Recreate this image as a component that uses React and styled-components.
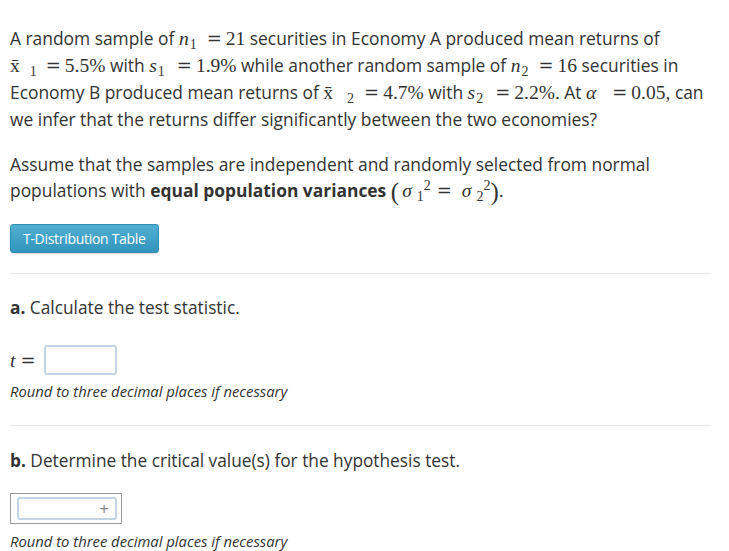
import React from "react";
import styled, { createGlobalStyle } from "styled-components";

const GlobalStyle = createGlobalStyle`
  body {
    margin: 0;
    background: #fff;
    font-family: "Open Sans", "Noto Sans", sans-serif;
    color: #333;
  }
`;

const Page = styled.div`
  width: 701px;
  padding: 25px 0 0 10px;
`;

const Para = styled.p`
  margin: 0 0 ${(p) => p.$gap || 0}px;
  font-size: 17.4px;
  line-height: 26.7px;
`;

const M = styled.span`
  font-family: "Liberation Serif", "DejaVu Serif", serif;
  font-size: 19.5px;
  line-height: 1;
  font-style: ${(p) => (p.$i ? "italic" : "normal")};
  white-space: nowrap;
`;

const Sub = styled.span`
  display: inline-block;
  font-size: 14px;
  font-style: normal;
  line-height: 1;
  vertical-align: -4px;
  margin-left: ${(p) => p.$gap || 1}px;
`;

const Sup = styled.span`
  display: inline-block;
  font-size: 14px;
  font-style: normal;
  line-height: 1;
  vertical-align: 7px;
`;

const Eq = styled.span`
  font-family: "DejaVu Serif", serif;
  font-size: 18px;
  font-style: normal;
  font-weight: normal;
  margin: 0 ${(p) => p.$r ?? 4}px 0 ${(p) => p.$l ?? 10}px;
`;

const Paren = styled.span`
  display: inline-block;
  font-size: 25px;
  line-height: 1;
  vertical-align: -3px;
  margin: 0 ${(p) => p.$r || 0}px 0 ${(p) => p.$l || 0}px;
`;

const TableButton = styled.button`
  display: block;
  height: 29px;
  padding: 0 12px;
  border: 1px solid #2f8db3;
  border-radius: 3px;
  background: linear-gradient(#50b0d3, #3394bd);
  color: #fff;
  font-family: "Open Sans", sans-serif;
  font-size: 14px;
  letter-spacing: -0.3px;
  box-shadow: 0 1px 1px rgba(0, 0, 0, 0.15);
  margin: 20px 0 0;
`;

const Divider = styled.hr`
  border: 0;
  border-top: 1px solid #e8e8e8;
  margin: ${(p) => p.$top}px 0 0;
  width: 701px;
`;

const Heading = styled.h3`
  margin: ${(p) => p.$top || 21}px 0 0;
  font-size: 17.3px;
  font-weight: normal;
  line-height: 26px;
  b {
    font-weight: 700;
  }
`;

const AnswerRow = styled.div`
  display: flex;
  align-items: center;
  height: 30px;
  margin-top: 24px;
`;

const TextBox = styled.input`
  box-sizing: border-box;
  flex: 0 0 auto;
  width: 73px;
  height: 30px;
  margin: 0 0 0 8px;
  padding: 0;
  border: 2px solid #c3d4e6;
  border-radius: 3px;
  background: #fff;
  outline: none;
`;

const Hint = styled.div`
  margin-top: ${(p) => p.$top}px;
  font-size: 14.8px;
  font-style: italic;
  line-height: 20px;
  color: #333;
`;

const ListBox = styled.div`
  box-sizing: border-box;
  width: 112px;
  height: 31px;
  margin-top: 19px;
  border: 1px solid #999;
  padding: 3px 4px 3px 6px;
`;

const ListInner = styled.div`
  box-sizing: border-box;
  height: 23px;
  border: 2px solid #c3d4e6;
  border-radius: 3px;
  display: flex;
  align-items: center;
  justify-content: flex-end;
  padding-right: 6px;
  color: #888;
  font-size: 17px;
`;

export default function App() {
  return (
    <>
      <GlobalStyle />
      <Page>
        <Para $gap={18}>
          A random sample of{" "}
          <M $i>
            n<Sub>1</Sub>
            <Eq>=</Eq>
          </M>
          <M>21</M> securities in Economy A produced mean returns of{" "}
          <M>
            x̄<Sub $gap={10}>1</Sub>
            <Eq $l={9}>=</Eq>5.5%
          </M>{" "}
          with{" "}
          <M $i>
            s<Sub>1</Sub>
            <Eq $l={12}>=</Eq>
          </M>
          <M>1.9%</M> while another random sample of{" "}
          <M $i>
            n<Sub>2</Sub>
            <Eq>=</Eq>
          </M>
          <M>16</M> securities in Economy B produced mean returns of{" "}
          <M>
            x̄<Sub $gap={14}>2</Sub>
            <Eq>=</Eq>4.7%
          </M>{" "}
          with{" "}
          <M $i>
            s<Sub>2</Sub>
            <Eq $l={12}>=</Eq>
          </M>
          <M>2.2%.</M> At{" "}
          <M $i>
            α<Eq $l={16}>=</Eq>
          </M>
          <M>0.05,</M> can we infer that the returns differ significantly
          between the two economies?
        </Para>
        <Para>
          Assume that the samples are independent and randomly selected from
          normal populations with <b>equal population variances</b>{" "}
          <M>
            <Paren $r={3}>(</Paren>
            <i>σ</i>
            <Sub $gap={5}>1</Sub>
            <Sup>2</Sup>
            <Eq $l={6} $r={10}>=</Eq>
            <i>σ</i>
            <Sub $gap={5}>2</Sub>
            <Sup>2</Sup>
            <Paren>)</Paren>.
          </M>
        </Para>
        <TableButton>T-Distribution Table</TableButton>
        <Divider $top={20} />
        <Heading>
          <b>a.</b> Calculate the test statistic.
        </Heading>
        <AnswerRow>
          <M $i>
            t<Eq $l={5} $r={0}>=</Eq>
          </M>
          <TextBox />
        </AnswerRow>
        <Hint $top={6}>Round to three decimal places if necessary</Hint>
        <Divider $top={24} />
        <Heading $top={22}>
          <b>b.</b> Determine the critical value(s) for the hypothesis test.
        </Heading>
        <ListBox>
          <ListInner>+</ListInner>
        </ListBox>
        <Hint $top={7}>Round to three decimal places if necessary</Hint>
      </Page>
    </>
  );
}
